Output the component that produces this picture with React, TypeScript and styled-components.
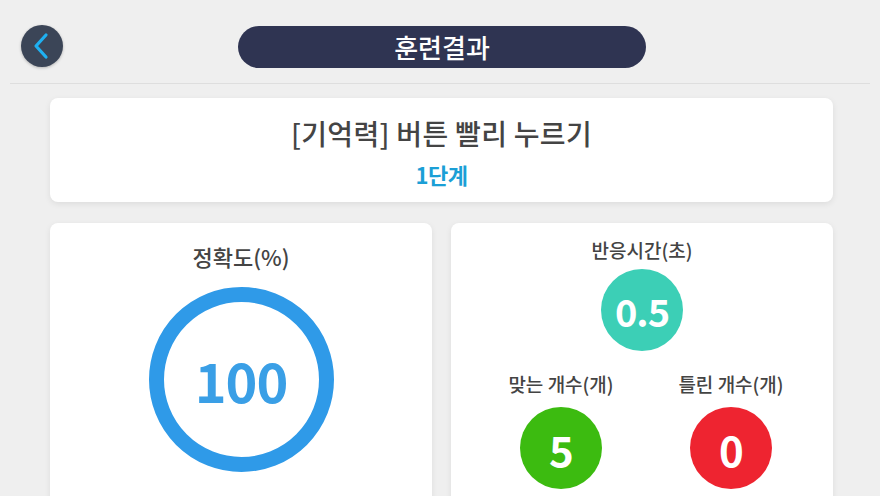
import React from "react";
import styled, { createGlobalStyle } from "styled-components";

const Global = createGlobalStyle`
  html, body { margin: 0; padding: 0; background: #efefef; }
  body { font-family: "Noto Sans CJK KR", "Noto Sans", sans-serif; overflow: hidden; }
  * { box-sizing: border-box; }
`;

const Page = styled.div`
  width: 880px;
  height: 496px;
  background: #efefef;
  overflow: hidden;
`;

const Header = styled.header`
  display: grid;
  grid-template-columns: 1fr 408px 1fr;
  align-items: center;
  height: 84px;
  margin: 0 10px;
  padding: 10px 11px 0;
  border-bottom: 1px solid #dedede;
`;

const BackButton = styled.button`
  width: 42px;
  height: 42px;
  border-radius: 50%;
  border: none;
  padding: 0 3px 0 0;
  margin-top: -2px;
  background: #3b4557;
  box-shadow: 0 1px 3px rgba(0,0,0,0.25);
  display: flex;
  align-items: center;
  justify-content: center;
  justify-self: start;
`;

const TitlePill = styled.div`
  height: 42px;
  border-radius: 21px;
  background: #2f3452;
  color: #fff;
  font-size: 26px;
  font-weight: 500;
  display: flex;
  align-items: center;
  justify-content: center;
  margin-left: 2px;
  margin-right: -2px;
`;

const Main = styled.main`
  padding: 14px 47px 0 50px;
  display: flex;
  flex-direction: column;
  gap: 21px;
`;

const Card = styled.section`
  background: #fff;
  border-radius: 8px;
  box-shadow: 0 2px 6px rgba(0,0,0,0.08);
`;

const InfoCard = styled(Card)`
  height: 104px;
  padding-top: 2px;
  display: flex;
  flex-direction: column;
  align-items: center;
  justify-content: center;
  gap: 9px;
`;

const TestName = styled.div`
  font-size: 28px;
  font-weight: 500;
  color: #444;
  letter-spacing: 0.3px;
  line-height: 36px;
`;

const Level = styled.div`
  font-size: 22px;
  font-weight: 700;
  color: #1b9fd6;
  line-height: 28px;
  letter-spacing: -0.5px;
`;

const Stats = styled.div`
  display: grid;
  grid-template-columns: 1fr 1fr;
  gap: 19px;
`;

const StatCard = styled(Card)<{ $top: number }>`
  height: 300px;
  display: flex;
  flex-direction: column;
  align-items: center;
  padding-top: ${(p) => p.$top}px;
`;

const Label = styled.div<{ $size?: number }>`
  font-size: ${(p) => p.$size ?? 19}px;
  color: #444;
  font-weight: 500;
  line-height: 26px;
`;

const Ring = styled.div`
  margin-top: 18px;
  width: 185px;
  height: 185px;
  border-radius: 50%;
  border: 15px solid #2f9ae8;
  display: flex;
  align-items: center;
  justify-content: center;
  color: #3a9fe6;
  font-size: 54px;
  font-weight: 700;
  letter-spacing: -1px;
`;

const Bubble = styled.div<{ $color: string; $size: number }>`
  width: 82px;
  height: 82px;
  border-radius: 50%;
  background: ${(p) => p.$color};
  color: #fff;
  font-size: ${(p) => p.$size}px;
  font-weight: 700;
  display: flex;
  align-items: center;
  justify-content: center;
  letter-spacing: -1px;
`;

const Counts = styled.div`
  display: grid;
  grid-template-columns: 1fr 1fr;
  width: 100%;
  padding: 0 17px 0 25px;
  margin-top: 20px;
`;

const CountCol = styled.div`
  display: flex;
  flex-direction: column;
  align-items: center;
  gap: 10px;
`;

const Gap = styled.div`
  height: 6px;
`;

export default function App() {
  return (
    <Page>
      <Global />
      <Header>
        <BackButton aria-label="back">
          <svg width="18" height="30" viewBox="0 0 18 30">
            <path d="M14 4 L4 15 L14 26" fill="none" stroke="#1fb0f0" strokeWidth="3.2" strokeLinecap="round" strokeLinejoin="round" />
          </svg>
        </BackButton>
        <TitlePill>훈련결과</TitlePill>
        <div />
      </Header>
      <Main>
        <InfoCard>
          <TestName>[기억력] 버튼 빨리 누르기</TestName>
          <Level>1단계</Level>
        </InfoCard>
        <Stats>
          <StatCard $top={20}>
            <Label $size={22}>정확도(%)</Label>
            <Ring>100</Ring>
          </StatCard>
          <StatCard $top={14}>
            <Label>반응시간(초)</Label>
            <Gap />
            <Bubble $color="#3ccfb6" $size={38}>0.5</Bubble>
            <Counts>
              <CountCol>
                <Label>맞는 개수(개)</Label>
                <Bubble $color="#3cbb10" $size={42}>5</Bubble>
              </CountCol>
              <CountCol>
                <Label>틀린 개수(개)</Label>
                <Bubble $color="#ee2430" $size={42}>0</Bubble>
              </CountCol>
            </Counts>
          </StatCard>
        </Stats>
      </Main>
    </Page>
  );
}
